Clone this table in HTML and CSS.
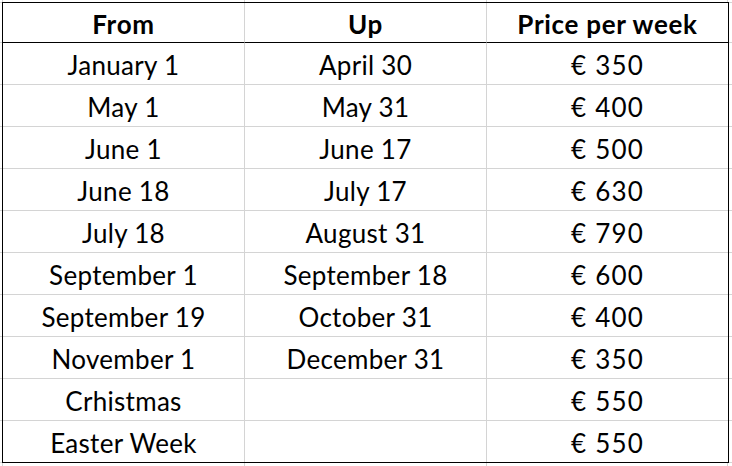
FILE: index.html
```html
<!DOCTYPE html>
<html lang="en">
<head>
<meta charset="utf-8">
<title>Prices</title>
<link rel="stylesheet" href="styles.css">
</head>
<body>
<div class="sheet">
  <div class="table">
    <div class="cell head">From</div>
    <div class="cell head">Up</div>
    <div class="cell head">Price per week</div>

    <div class="cell">January 1</div>
    <div class="cell">April 30</div>
    <div class="cell price">€ 350</div>

    <div class="cell">May 1</div>
    <div class="cell">May 31</div>
    <div class="cell price">€ 400</div>

    <div class="cell">June 1</div>
    <div class="cell">June 17</div>
    <div class="cell price">€ 500</div>

    <div class="cell">June 18</div>
    <div class="cell">July 17</div>
    <div class="cell price">€ 630</div>

    <div class="cell">July 18</div>
    <div class="cell">August 31</div>
    <div class="cell price">€ 790</div>

    <div class="cell">September 1</div>
    <div class="cell">September 18</div>
    <div class="cell price">€ 600</div>

    <div class="cell">September 19</div>
    <div class="cell">October 31</div>
    <div class="cell price">€ 400</div>

    <div class="cell">November 1</div>
    <div class="cell">December 31</div>
    <div class="cell price">€ 350</div>

    <div class="cell">Crhistmas</div>
    <div class="cell"></div>
    <div class="cell price">€ 550</div>

    <div class="cell end">Easter Week</div>
    <div class="cell end"></div>
    <div class="cell price end">€ 550</div>
  </div>
</div>
</body>
</html>
```
FILE: styles.css
```css
* { box-sizing: border-box; }

html, body {
  margin: 0;
  padding: 0;
  background: #ffffff;
}

.sheet {
  width: 732px;
  height: 466px;
  overflow: hidden;
  padding: 2px 0 0 2px;
  background:
    linear-gradient(#d4d4d4, #d4d4d4) 2px 0 / 1px 100% no-repeat,
    linear-gradient(#d4d4d4, #d4d4d4) 244px 0 / 1px 100% no-repeat,
    linear-gradient(#d4d4d4, #d4d4d4) 486px 0 / 1px 100% no-repeat,
    linear-gradient(#d4d4d4, #d4d4d4) 727px 0 / 1px 100% no-repeat,
    linear-gradient(#d4d4d4, #d4d4d4) 0 2px / 100% 1px no-repeat,
    repeating-linear-gradient(to bottom, #d4d4d4 0 1px, transparent 1px 42px) 0 42px / 100% 100% no-repeat,
    #ffffff;
}

.table {
  display: grid;
  grid-template-columns: 242px 242px 241px;
  width: max-content;
  border: 1px solid #000000;
  background: #ffffff;
  font-family: Lato, "Noto Sans", sans-serif;
  font-size: 26px;
  line-height: 28px;
  letter-spacing: 0.3px;
  color: #000000;
}

.cell {
  height: 42px;
  padding-top: 8px;
  text-align: center;
  white-space: nowrap;
  border-right: 1px solid #d4d4d4;
  border-bottom: 1px solid #d4d4d4;
}

.cell:nth-child(3n) {
  border-right: none;
}

.price {
  letter-spacing: 1.2px;
}

.head {
  height: 40px;
  padding-top: 7px;
  font-weight: 700;
  letter-spacing: 0.7px;
  border-bottom: 1px solid #000000;
}

.end {
  height: 41px;
  border-bottom: none;
}
```
